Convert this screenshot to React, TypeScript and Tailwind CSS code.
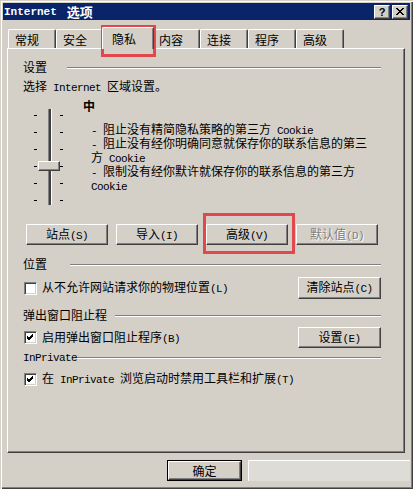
import React from "react";

const raised =
  "border border-t-white border-l-white border-r-[#404040] border-b-[#404040] shadow-[inset_-1px_-1px_0_#808080] bg-[#d4d0c8]";

function M({ children }: { children: React.ReactNode }) {
  return (
    <span className="font-['Liberation_Mono',monospace] text-[11px] tracking-[-0.6px] whitespace-pre">
      {children}
    </span>
  );
}

function Btn({
  children,
  className = "",
  disabled = false,
}: {
  children: React.ReactNode;
  className?: string;
  disabled?: boolean;
}) {
  return (
    <div
      className={`${raised} flex items-center justify-center ${
        disabled ? "text-[#808080] [text-shadow:1px_1px_0_#fff]" : "text-black"
      } ${className}`}
    >
      <span>{children}</span>
    </div>
  );
}

function Header({
  children,
  labelClass,
  className = "",
}: {
  children: React.ReactNode;
  labelClass: string;
  className?: string;
}) {
  return (
    <div className={`flex items-center h-[12px] ${className}`}>
      <div className={`shrink-0 whitespace-nowrap ${labelClass}`}>{children}</div>
      <div className="flex-1 h-px bg-[#808080] shadow-[0_1px_0_#ffffff]" />
    </div>
  );
}

function Check({ checked }: { checked: boolean }) {
  return (
    <div className="w-[13px] h-[13px] shrink-0 border border-t-[#808080] border-l-[#808080] border-r-white border-b-white shadow-[inset_1px_1px_0_#404040,inset_-1px_-1px_0_#d4d0c8] bg-white flex items-center justify-center">
      {checked && (
        <svg width="7" height="7" viewBox="0 0 7 7">
          <path d="M0 2 L2 4 L6 0 M0 3 L2 5 L6 1 M0 4 L2 6 L6 2" stroke="#000" strokeWidth="1" fill="none" shapeRendering="crispEdges" />
        </svg>
      )}
    </div>
  );
}

function Tab({ label, selected = false }: { label: string; selected?: boolean }) {
  if (selected) {
    return (
      <div className="relative z-10 -mx-[2px] -mb-px w-[52px] h-[22px] bg-[#d4d0c8] border-t border-l border-t-white border-l-white border-r border-r-[#404040] shadow-[inset_-1px_0_0_#808080] rounded-t-[2px] pl-[9px] pt-[5px] leading-[12px]">
        {label}
      </div>
    );
  }
  return (
    <div className="w-[48px] h-[19px] bg-[#d4d0c8] border-t border-l border-t-white border-l-white border-r border-r-[#404040] shadow-[inset_-1px_0_0_#808080] rounded-t-[2px] pl-[6px] pt-[4px] leading-[12px]">
      {label}
    </div>
  );
}

export default function App() {
  const ticks = [6, 23, 40, 57, 74, 91];
  return (
    <div className="relative w-[413px] h-[489px] overflow-hidden bg-[#d4d0c8] font-['Noto_Sans_CJK_SC','Liberation_Sans',sans-serif] text-[12px] leading-[12px] text-black shadow-[inset_1px_1px_0_#d4d0c8,inset_2px_2px_0_#ffffff,inset_-1px_-1px_0_#404040,inset_-2px_-2px_0_#808080]">
      {/* Title bar */}
      <div className="mx-[3px] mt-[3px] h-[17px] bg-[#0a246a] flex items-center pl-[1px] pr-[2px]">
        <div className="text-white font-bold flex items-center">
          <span className="font-['Liberation_Mono',monospace] text-[11px] font-bold">Internet</span>
          <span className="ml-[10px] text-[13px]">选项</span>
        </div>
        <div className="ml-auto flex gap-[2px]">
          <div className={`${raised} w-[16px] h-[14px] flex items-center justify-center font-['Liberation_Sans',sans-serif] font-bold text-[11px]`}>
            ?
          </div>
          <div className={`${raised} w-[16px] h-[14px] flex items-center justify-center`}>
            <svg width="8" height="7" viewBox="0 0 8 7" shapeRendering="crispEdges">
              <path d="M0 0h2v1h-2z M6 0h2v1h-2z M1 1h2v1h-2z M5 1h2v1h-2z M2 2h4v1h-4z M3 3h2v1h-2z M2 4h4v1h-4z M1 5h2v1h-2z M5 5h2v1h-2z M0 6h2v1h-2z M6 6h2v1h-2z" fill="#000" />
            </svg>
          </div>
        </div>
      </div>

      {/* Tabs */}
      <div className="ml-[8px] mt-[7px] h-[21px] flex items-end">
        <Tab label="常规" />
        <Tab label="安全" />
        <Tab label="隐私" selected />
        <Tab label="内容" />
        <Tab label="连接" />
        <Tab label="程序" />
        <Tab label="高级" />
      </div>

      {/* Panel */}
      <div className="ml-[7px] w-[398px] h-[405px] border border-t-white border-l-white border-r-[#404040] border-b-[#404040] shadow-[inset_-1px_-1px_0_#808080] pl-[15px] pr-[23px] flex flex-col">
        <Header labelClass="w-[44px]" className="mt-[12px]">设置</Header>
        <div className="mt-[7px] whitespace-pre">
          选择<M> Internet </M>区域设置。
        </div>

        {/* Slider block */}
        <div className="mt-[6px] h-[108px] flex">
          <div className="ml-[11px] mt-[9px] relative w-[30px] h-[96px]">
            {ticks.map((t) => (
              <React.Fragment key={t}>
                <div className="absolute left-0 w-[3px] h-px bg-black" style={{ top: t }} />
                <div className="absolute left-[26px] w-[3px] h-px bg-black" style={{ top: t }} />
              </React.Fragment>
            ))}
            <div className="absolute left-[14px] top-0 w-[4px] h-[96px] border-l border-l-[#808080] border-r border-r-white bg-[#404040]" />
            <div className={`absolute left-[4px] top-[52px] w-[22px] h-[10px] ${raised}`} />
          </div>
          <div className="ml-[19px] flex flex-col">
            <div className="font-bold">中</div>
            <div className="ml-[8px] mt-[11px] flex flex-col whitespace-pre">
              <div>
                <M>- </M>阻止没有精简隐私策略的第三方<M> Cookie</M>
              </div>
              <div>
                <M>- </M>阻止没有经你明确同意就保存你的联系信息的第三
              </div>
              <div>
                方<M> Cookie</M>
              </div>
              <div>
                <M>- </M>限制没有经你默许就保存你的联系信息的第三方
              </div>
              <div>
                <M>Cookie</M>
              </div>
            </div>
          </div>
        </div>

        {/* Buttons row */}
        <div className="mt-[16px] ml-[3px] flex gap-[8px]">
          <Btn className="w-[82px] h-[21px]">
            站点<M>(S)</M>
          </Btn>
          <Btn className="w-[82px] h-[21px]">
            导入<M>(I)</M>
          </Btn>
          <Btn className="w-[82px] h-[21px]">
            高级<M>(V)</M>
          </Btn>
          <Btn className="w-[82px] h-[21px]" disabled>
            默认值<M>(D)</M>
          </Btn>
        </div>

        <Header labelClass="w-[47px]" className="mt-[13px]">位置</Header>
        <div className="mt-[7px] h-[22px] flex items-center">
          <div className="ml-[1px] flex items-center gap-[5px]">
            <Check checked={false} />
            <span className="whitespace-pre">
              从不允许网站请求你的物理位置<M>(L)</M>
            </span>
          </div>
          <Btn className="ml-auto w-[83px] h-[22px]">
            清除站点<M>(C)</M>
          </Btn>
        </div>

        <Header labelClass="w-[92px]" className="mt-[10px]">弹出窗口阻止程</Header>
        <div className="mt-[6px] h-[21px] flex items-center">
          <div className="ml-[1px] flex items-center gap-[5px]">
            <Check checked />
            <span className="whitespace-pre">
              启用弹出窗口阻止程序<M>(B)</M>
            </span>
          </div>
          <Btn className="ml-auto w-[83px] h-[21px]">
            设置<M>(E)</M>
          </Btn>
        </div>

        <Header labelClass="w-[54px]" className="mt-[3px]">
          <M>InPrivate</M>
        </Header>
        <div className="mt-[10px] h-[12px] flex items-center">
          <div className="ml-[1px] flex items-center gap-[5px]">
            <Check checked />
            <span className="whitespace-pre">
              在<M> InPrivate </M>浏览启动时禁用工具栏和扩展<M>(T)</M>
            </span>
          </div>
        </div>
      </div>

      {/* Bottom buttons */}
      <div className="mt-[7px] flex">
        <div className="ml-[167px] w-[75px] h-[21px] border border-black">
          <Btn className="w-full h-full">确定</Btn>
        </div>
        <div className="ml-[6px] w-[162px] h-[21px] bg-[#dedcd7] border-t border-l border-t-white border-l-white" />
      </div>

      {/* Red annotation boxes */}
      <div className="absolute left-[101px] top-[25px] w-[55px] h-[32px] border-[3px] border-[#e2474b] pointer-events-none" />
      <div className="absolute left-[203px] top-[213px] w-[92px] h-[41px] border-[3px] border-[#e2474b] pointer-events-none" />
    </div>
  );
}
